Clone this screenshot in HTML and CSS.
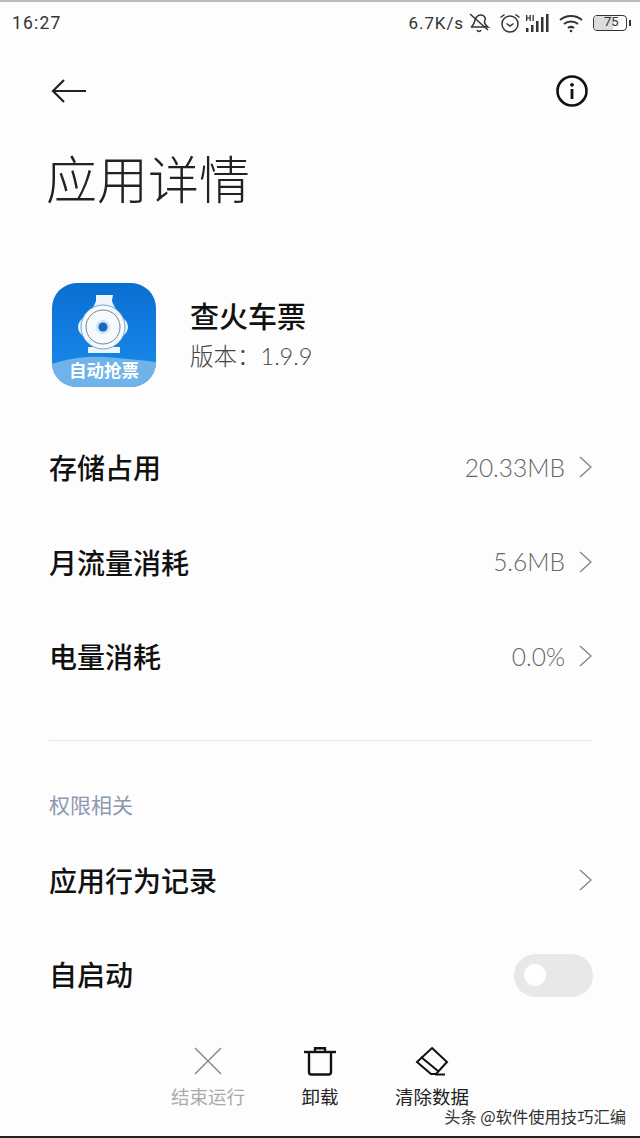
FILE: index.html
```html
<!DOCTYPE html>
<html lang="zh-CN">
<head>
    <meta charset="UTF-8">
    <meta name="viewport" content="width=device-width, initial-scale=1.0">
    <title>应用详情</title>
    <link rel="stylesheet" href="styles.css">
</head>
<body>
    <div class="phone">
        <!-- status bar -->
        <div class="statusBar">
            <span class="time">16:27</span>
            <div class="statusRight">
                <span class="speed">6.7K/s</span>
                <svg class="bell" width="22" height="24" viewBox="0 0 22 24" fill="none" stroke="#333" stroke-width="1.5">
                    <path d="M3 16c2-1 3-3 4-7 1-3 3-5 6-5s5 3 4 5c-1 2 0 5 3 7z"/>
                    <path d="M9 19c1 2 3 2 4 0"/>
                    <path d="M2 3l18 16"/>
                </svg>
                <svg class="alarm" width="22" height="22" viewBox="0 0 22 22" fill="none" stroke="#333" stroke-width="1.5">
                    <circle cx="11" cy="12" r="8"/>
                    <path d="M7.5 11.5l3.5 2.500 3.500-2.500"/>
                    <path d="M1.500 5.500l4-3M20.500 5.500l-4-3"/>
                </svg>
                <svg class="signal" width="26" height="20" viewBox="0 0 26 20" fill="#333">
                    <rect x="1" y="15" width="2.500" height="4"/>
                    <rect x="6" y="12" width="2.500" height="7"/>
                    <rect x="11" y="8" width="2.500" height="11"/>
                    <rect x="16" y="4" width="2.500" height="15"/>
                    <rect x="21" y="1" width="2.500" height="18"/>
                    <rect x="1" y="2" width="1.300" height="6"/>
                    <rect x="4.500" y="2" width="1.300" height="6"/>
                    <rect x="2" y="4.400" width="3" height="1.200"/>
                    <rect x="7.500" y="2" width="1.300" height="6"/>
                </svg>
                <svg class="wifi" width="26" height="20" viewBox="0 0 26 20" fill="none" stroke="#333" stroke-width="2">
                    <path d="M2 7c6-5.500 16-5.500 22 0"/>
                    <path d="M6 11c4-3.500 10-3.500 14 0"/>
                    <path d="M10 15c2-1.500 4-1.500 6 0"/>
                    <circle cx="13" cy="18" r="1.300" fill="#333" stroke="none"/>
                </svg>
                <div class="battery">
                    <div class="batteryBody">
                        <div class="batteryFill"></div>
                        <span class="batteryText">75</span>
                    </div>
                    <div class="batteryTip"></div>
                </div>
            </div>
        </div>

        <!-- nav -->
        <div class="navBar">
            <svg width="36" height="26" viewBox="0 0 36 26" fill="none" stroke="#222" stroke-width="2.200">
                <path d="M35 13H2"/>
                <path d="M13 2L2 13l11 11"/>
            </svg>
            <svg width="34" height="34" viewBox="0 0 34 34" fill="none">
                <circle cx="17" cy="17" r="14.500" stroke="#111" stroke-width="2.600"/>
                <rect x="15.600" y="15" width="2.800" height="10" fill="#111"/>
                <circle cx="17" cy="10.800" r="1.900" fill="#111"/>
            </svg>
        </div>

        <h1 class="pageTitle">应用详情</h1>

        <!-- app info -->
        <div class="appInfo">
            <div class="appIcon">
                <svg width="104" height="104" viewBox="0 0 104 104">
                    <defs>
                        <linearGradient id="iconBlue" x1="0" y1="0" x2="0" y2="1">
                            <stop offset="0" stop-color="#0a6fd2"/>
                            <stop offset="1" stop-color="#1a8cec"/>
                        </linearGradient>
                    </defs>
                    <rect width="104" height="104" rx="25" fill="url(#iconBlue)"/>
                    <path d="M0 81c18-6 34-8 52-7s36 3 52 5v-1 1c0 14-11 25-25 25H25C11 104 0 93 0 81z" fill="#6fb3ea"/>
                    <path d="M44 12h17l-1 5c0 3 3 7 5 11H39c2-4 5-8 5-11z" fill="#eef5fb"/>
                    <ellipse cx="51" cy="44" rx="25" ry="15" fill="#eef5fb"/>
                    <rect x="41" y="60" width="21" height="6" fill="#eef5fb"/>
                    <rect x="36" y="64" width="32" height="6" fill="#eef5fb"/>
                    <circle cx="51" cy="44" r="22" fill="#f6fafd" stroke="#6aa5db" stroke-width="1"/>
                    <circle cx="51" cy="44" r="17" fill="none" stroke="#6f8498" stroke-width="1"/>
                    <circle cx="51" cy="44" r="7" fill="#cfe2f4"/>
                    <circle cx="51" cy="44" r="4.500" fill="#1668c4"/>
                    <text class="iconText" x="52" y="94">自动抢票</text>
                </svg>
            </div>
            <div class="appText">
                <div class="appName">查火车票</div>
                <div class="appVersion">版本：1.9.9</div>
            </div>
        </div>

        <!-- usage rows -->
        <div class="rowList">
            <div class="row">
                <span class="rowLabel">存储占用</span>
                <div class="rowRight">
                    <span class="rowValue">20.33MB</span>
                    <svg class="chevron" width="13" height="22" viewBox="0 0 13 22" fill="none" stroke="#888" stroke-width="1.500"><path d="M1 1l11 10L1 21"/></svg>
                </div>
            </div>
            <div class="row">
                <span class="rowLabel">月流量消耗</span>
                <div class="rowRight">
                    <span class="rowValue">5.6MB</span>
                    <svg class="chevron" width="13" height="22" viewBox="0 0 13 22" fill="none" stroke="#888" stroke-width="1.500"><path d="M1 1l11 10L1 21"/></svg>
                </div>
            </div>
            <div class="row">
                <span class="rowLabel">电量消耗</span>
                <div class="rowRight">
                    <span class="rowValue">0.0%</span>
                    <svg class="chevron" width="13" height="22" viewBox="0 0 13 22" fill="none" stroke="#888" stroke-width="1.500"><path d="M1 1l11 10L1 21"/></svg>
                </div>
            </div>
        </div>

        <hr class="divider">

        <div class="sectionTitle">权限相关</div>

        <div class="row">
            <span class="rowLabel">应用行为记录</span>
            <div class="rowRight">
                <svg class="chevron" width="13" height="22" viewBox="0 0 13 22" fill="none" stroke="#888" stroke-width="1.500"><path d="M1 1l11 10L1 21"/></svg>
            </div>
        </div>
        <div class="row">
            <span class="rowLabel">自启动</span>
            <div class="toggle"><div class="knob"></div></div>
        </div>

        <!-- bottom actions -->
        <div class="actionBar">
            <div class="action disabled">
                <svg width="34" height="30" viewBox="0 0 34 30" fill="none" stroke="#8a8a8a" stroke-width="1.500"><path d="M4 2l26 26M30 2L4 28"/></svg>
                <span>结束运行</span>
            </div>
            <div class="action">
                <svg width="34" height="30" viewBox="0 0 34 30" fill="none" stroke="#111" stroke-width="2.400">
                    <path d="M1 6h32"/>
                    <path d="M12 6V2.200h10V6"/>
                    <path d="M6 6v20c0 1.500 1 2.500 2.500 2.500h17c1.500 0 2.500-1 2.500-2.500V6"/>
                </svg>
                <span>卸载</span>
            </div>
            <div class="action">
                <svg width="34" height="30" viewBox="0 0 34 30" fill="none" stroke="#111" stroke-width="2">
                    <path d="M17 2l15 14-11 12h-5L2 16z"/>
                    <path d="M6 11l17 14"/>
                    <path d="M20 28.500h10"/>
                </svg>
                <span>清除数据</span>
            </div>
        </div>

        <div class="watermark">头条 @软件使用技巧汇编</div>
    </div>
</body>
</html>
```

FILE: styles.css
```css
* {
    margin: 0;
    padding: 0;
    box-sizing: border-box;
}

body {
    font-family: "Noto Sans CJK SC", "Lato", sans-serif;
    background-color: #fdfdfd;
}

.phone {
    position: relative;
    width: 640px;
    height: 1138px;
    overflow: hidden;
    border-top: 2px solid #bcbcbc;
    border-bottom: 2px solid #222;
    background-color: #fdfdfd;
}

/* status bar */
.statusBar {
    display: flex;
    justify-content: space-between;
    align-items: center;
    height: 42px;
    padding: 0 9px 0 12px;
    color: #333;
}

.time {
    font-family: "Roboto", sans-serif;
    font-size: 17.500px;
    letter-spacing: 1.200px;
}

.statusRight {
    display: flex;
    align-items: center;
    gap: 4px;
}

.speed {
    font-family: "Roboto", sans-serif;
    font-size: 17px;
    letter-spacing: 0.900px;
}

.alarm {
    margin-left: 5px;
}

.wifi {
    margin-left: 3px;
}

.battery {
    display: flex;
    align-items: center;
    margin-left: 5px;
}

.batteryBody {
    position: relative;
    width: 34px;
    height: 16px;
    border: 1.500px solid #333;
    border-radius: 4px;
    overflow: hidden;
}

.batteryFill {
    width: 60%;
    height: 100%;
    background-color: #dcdcdc;
}

.batteryText {
    position: absolute;
    top: -2px;
    left: 10px;
    font-family: "Roboto", sans-serif;
    font-size: 13px;
    color: #333;
}

.batteryTip {
    width: 2px;
    height: 6px;
    margin-left: 2px;
    background-color: #333;
}

/* nav */
.navBar {
    display: flex;
    justify-content: space-between;
    align-items: center;
    height: 94px;
    padding: 0 51px;
}

.pageTitle {
    height: 78px;
    padding-left: 46px;
    font-size: 51px;
    font-weight: 300;
    line-height: 78px;
    color: #222;
}

/* app info */
.appInfo {
    display: flex;
    align-items: center;
    gap: 34px;
    height: 104px;
    margin-top: 67px;
    padding-left: 52px;
}

.appIcon {
    width: 104px;
    height: 104px;
}

.iconText {
    font-size: 17.500px;
    font-weight: 700;
    fill: #ffffff;
    text-anchor: middle;
}

.appText {
    padding-bottom: 4px;
}

.appName {
    font-size: 29px;
    font-weight: 500;
    line-height: 40px;
    color: #111;
}

.appVersion {
    margin-top: 5px;
    font-family: "Lato", "Noto Sans CJK SC", sans-serif;
    font-size: 23.500px;
    font-weight: 300;
    line-height: 32px;
    color: #444;
}

/* rows */
.rowList {
    margin-top: 33px;
}

.row {
    display: flex;
    justify-content: space-between;
    align-items: center;
    height: 94.500px;
    padding: 0 47px 0 49px;
}

.rowLabel {
    font-size: 28px;
    font-weight: 500;
    color: #111;
}

.rowRight {
    display: flex;
    align-items: center;
    gap: 14px;
    padding-right: 1px;
}

.rowValue {
    font-family: "Lato", sans-serif;
    font-size: 24.500px;
    font-weight: 300;
    color: #666;
}

.divider {
    height: 1px;
    margin: 36px 48px 0 49px;
    border: none;
    background-color: #e6e6e6;
}

.sectionTitle {
    height: 30px;
    margin-top: 48px;
    margin-bottom: 14px;
    padding-left: 49px;
    font-size: 21px;
    line-height: 30px;
    color: #8c98b2;
}

.toggle {
    display: flex;
    align-items: center;
    width: 79px;
    height: 43px;
    margin-top: 2px;
    padding-left: 10px;
    border-radius: 22px;
    background-color: #e8e8e8;
}

.knob {
    width: 22px;
    height: 22px;
    border-radius: 50%;
    background-color: #ffffff;
}

/* bottom bar */
.actionBar {
    position: absolute;
    left: 0;
    bottom: 27px;
    display: flex;
    width: 100%;
    padding-left: 152px;
}

.action {
    display: flex;
    flex-direction: column;
    align-items: center;
    width: 112px;
    font-size: 18.500px;
    line-height: 26px;
    color: #222;
}

.action svg {
    margin-bottom: 7px;
}

.action.disabled {
    color: #aaa;
}

.watermark {
    position: absolute;
    right: 14px;
    bottom: 8px;
    font-size: 16.300px;
    line-height: 24px;
    color: #333;
}
```
